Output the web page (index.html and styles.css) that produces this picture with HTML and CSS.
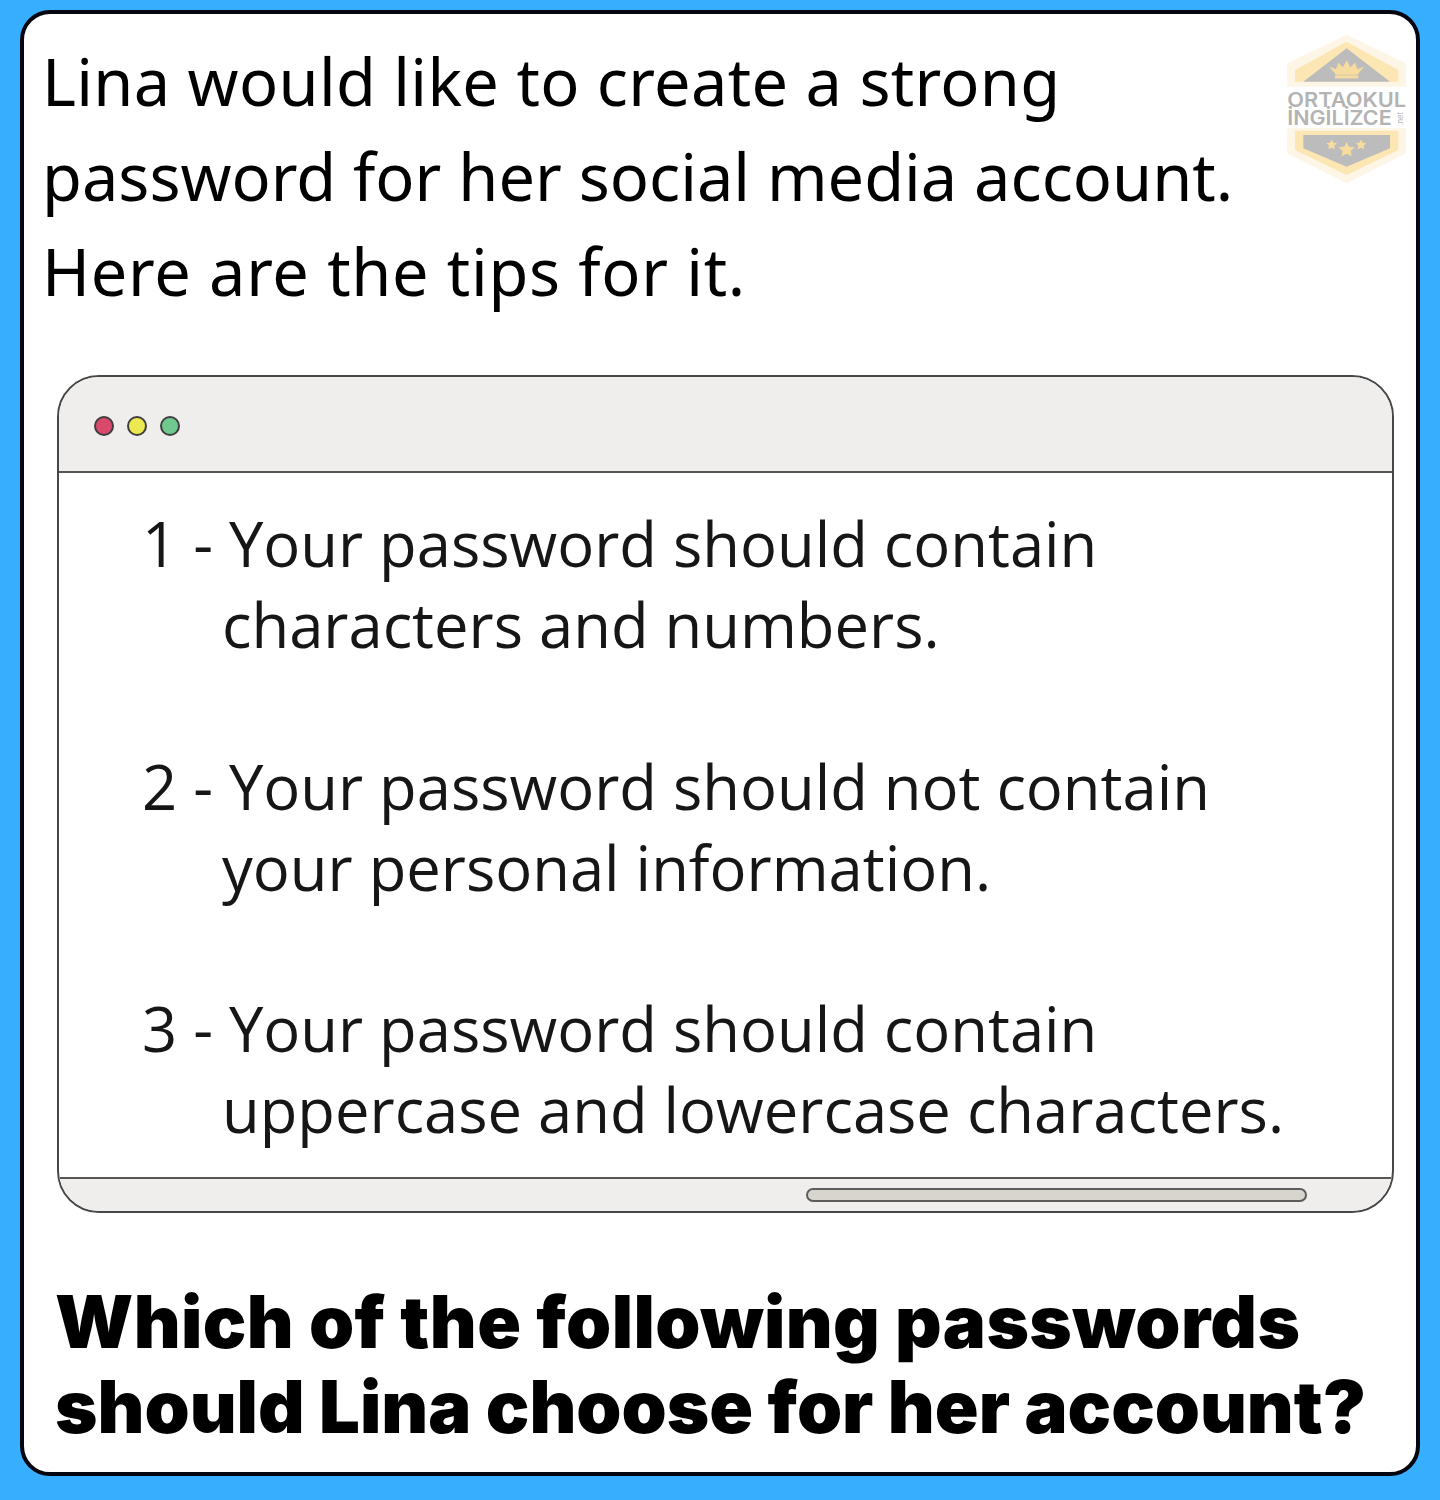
FILE: index.html
```html
<!DOCTYPE html>
<html lang="en">
<head>
<meta charset="utf-8">
<title>Password question</title>
<link rel="stylesheet" href="styles.css">
</head>
<body>
<main class="card">
  <header class="intro">
    <p class="intro-text"><span class="line-one">Lina would like to create a strong</span><br>password for her social media account.<br><span class="line-three">Here are the tips for it.</span></p>
    <svg class="logo" viewBox="42 39 372 453" width="124" height="151" aria-label="Ortaokul Ingilizce">
      <path d="M52 200V130L230 45l178 85v70z" fill="#fdf6e6"/>
      <path d="M75 185V150L230 65l155 85v35z" fill="#fce6b3"/>
      <path d="M100 185L230 85l130 100z" fill="#bcbcbc"/>
      <path d="M178 140l20 8 7-20 14 14 11-22 11 22 14-14 7 20 20-8-20 24h-64z" fill="#f8dc9f"/>
      <rect x="195" y="166" width="70" height="9" fill="#f8dc9f"/>
      <path d="M52 325v75l178 90 178-90v-75z" fill="#fdf6e6"/>
      <path d="M75 332v58l155 75 155-75v-58z" fill="#fce6b3"/>
      <path d="M100 345v40l130 55 130-55v-40z" fill="#bcbcbc"/>
      <g fill="#f8dc9f">
        <path d="M230 365l7 15 17 2-12 11 3 16-15-8-15 8 3-16-12-11 17-2z"/>
        <path d="M185 358l5 10 11 1-8 8 2 11-10-5-10 5 2-11-8-8 11-1z"/>
        <path d="M273 358l5 10 11 1-8 8 2 11-10-5-10 5 2-11-8-8 11-1z"/>
      </g>
      <text class="logo-top" x="52" y="260" textLength="356" lengthAdjust="spacingAndGlyphs">ORTAOKUL</text>
      <text class="logo-bottom" x="52" y="314" textLength="313" lengthAdjust="spacingAndGlyphs">İNGİLİZCE</text>
      <text class="logo-net" transform="translate(400 316) rotate(-90)">.net</text>
    </svg>
  </header>

  <section class="window">
    <div class="window-bar">
      <span class="dot dot-red"></span>
      <span class="dot dot-yellow"></span>
      <span class="dot dot-green"></span>
    </div>
    <div class="tips">
      <p class="tip"><span class="tip-first">1 - Your password should contain</span><span class="tip-rest">characters and numbers.</span></p>
      <p class="tip"><span class="tip-first">2 - Your password should not contain</span><span class="tip-rest">your personal information.</span></p>
      <p class="tip"><span class="tip-first">3 - Your password should contain</span><span class="tip-rest">uppercase and lowercase characters.</span></p>
    </div>
    <div class="window-foot"><span class="scrollbar"></span></div>
  </section>

  <h1 class="question"><span class="question-one">Which of the following passwords</span><br>should Lina choose for her account?</h1>
</main>
</body>
</html>
```
FILE: styles.css
```css
* { box-sizing: border-box; }
html, body { margin: 0; }
body {
  width: 1440px;
  height: 1500px;
  background: #38aeff;
  padding: 10px 20px 24px;
}
.card {
  height: 1466px;
  background: #fff;
  border: 4px solid #05060f;
  border-radius: 30px;
  padding: 24px 24px 0 17px;
}
.intro {
  display: flex;
  justify-content: space-between;
  align-items: flex-start;
  height: 337px;
}
.intro-text {
  margin: -4px 0 0 1px;
  font: 400 64.900px/95px "Noto Sans", sans-serif;
  color: #000;
}
.line-one { letter-spacing: 0.3px; }
.line-three { letter-spacing: 0.68px; }
.logo { margin: -5px -16px 0 0; flex: none; }
.logo-top, .logo-bottom { font: 600 60px Inter, sans-serif; fill: #b3b3b3; }
.logo-net { font: 400 22px Inter, sans-serif; fill: #b3b3b3; }
.window {
  margin-left: 16px;
  width: 1337px;
  height: 838px;
  border: 2px solid #474747;
  border-radius: 42px;
  overflow: hidden;
  display: flex;
  flex-direction: column;
}
.window-bar {
  flex: none;
  height: 96px;
  background: #efeeec;
  border-bottom: 2px solid #555;
  display: flex;
  align-items: center;
  gap: 13px;
  padding: 3px 0 0 35px;
}
.dot {
  width: 20px;
  height: 20px;
  border-radius: 50%;
  border: 2px solid #3f3f3f;
}
.dot-red { background: #d9496b; }
.dot-yellow { background: #ece84f; }
.dot-green { background: #6fc88d; }
.tips {
  flex: 1;
  padding: 30px 0 0 83px;
  display: flex;
  flex-direction: column;
  gap: 80.500px;
  font: 400 61.500px/81px "Open Sans", sans-serif;
  color: #161616;
}
.tip { margin: 0; }
.tip-first, .tip-rest { display: block; white-space: nowrap; }
.tip-rest { padding-left: 80px; }
.window-foot {
  flex: none;
  height: 34px;
  background: #efeeec;
  border-top: 2px solid #555;
  padding: 9px 85px 0 0;
  display: flex;
  justify-content: flex-end;
}
.scrollbar {
  width: 501px;
  height: 14px;
  background: #d8d5cf;
  border: 2px solid #5c5c5c;
  border-radius: 7px;
}
.question {
  margin: 0;
  padding: 66px 0 0 14px;
  font: 900 72.300px/85px Inter, sans-serif;
  color: #000;
  white-space: nowrap;
}
.question-one { letter-spacing: 0.4px; }
```
